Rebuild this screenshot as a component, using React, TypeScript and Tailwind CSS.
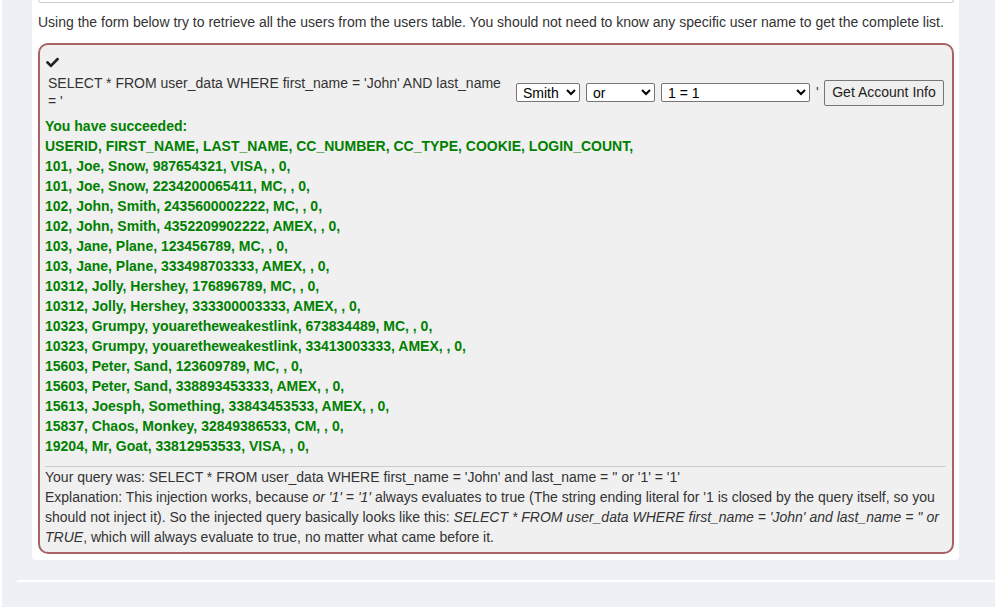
import { FaCheck } from "react-icons/fa";

// Result panel of an SQL injection lesson: prompt, the query form and the dumped rows.

const rows = [
  "USERID, FIRST_NAME, LAST_NAME, CC_NUMBER, CC_TYPE, COOKIE, LOGIN_COUNT,",
  "101, Joe, Snow, 987654321, VISA, , 0,",
  "101, Joe, Snow, 2234200065411, MC, , 0,",
  "102, John, Smith, 2435600002222, MC, , 0,",
  "102, John, Smith, 4352209902222, AMEX, , 0,",
  "103, Jane, Plane, 123456789, MC, , 0,",
  "103, Jane, Plane, 333498703333, AMEX, , 0,",
  "10312, Jolly, Hershey, 176896789, MC, , 0,",
  "10312, Jolly, Hershey, 333300003333, AMEX, , 0,",
  "10323, Grumpy, youaretheweakestlink, 673834489, MC, , 0,",
  "10323, Grumpy, youaretheweakestlink, 33413003333, AMEX, , 0,",
  "15603, Peter, Sand, 123609789, MC, , 0,",
  "15603, Peter, Sand, 338893453333, AMEX, , 0,",
  "15613, Joesph, Something, 33843453533, AMEX, , 0,",
  "15837, Chaos, Monkey, 32849386533, CM, , 0,",
  "19204, Mr, Goat, 33812953533, VISA, , 0,",
];

const selectCls =
  "h-[19px] rounded-[2px] border border-[#767676] bg-white pl-[2px] text-[14px] leading-none text-black";

export default function App() {
  return (
    <div className="h-[615px] w-[995px] overflow-hidden bg-white font-['Liberation_Sans',Arial,sans-serif] text-[14px] text-[#333]">
      <div className="ml-[2px] flex h-[607px] flex-col bg-[#eef0f5]">
        <div className="ml-[30px] mr-[36px] rounded-b-[4px] bg-white pb-[6px] pl-[6px] pr-[5px]">
          <div className="h-[3px] rounded-b-[4px] border-x border-b border-[#cfcfcf]" />

          <p className="mt-[10px] leading-[18px]">
            Using the form below try to retrieve all the users from the users table. You should not need to
            know any specific user name to get the complete list.
          </p>

          <div className="mt-[12px] rounded-[10px] border-2 border-[#a86464] bg-[#f0f0f0] pb-[5px] pl-[5px] pr-[6px]">
            <div className="pt-[7px] leading-[18px]">
              <FaCheck className="ml-[1px] inline h-[13px] w-[13px] text-[#222]" />
            </div>

            <div className="mt-[2px] flex items-center py-[2px]">
              <div className="w-[471px] pl-[3px] pr-[6px] leading-[18px]">
                SELECT * FROM user_data WHERE first_name = 'John' AND last_name = '
              </div>
              <div className="flex items-center pt-[1px]">
                <select className={`${selectCls} w-[64px]`} defaultValue="Smith">
                  <option>Smith</option>
                  <option>'</option>
                </select>
                <select className={`${selectCls} ml-[6px] w-[69px]`} defaultValue="or">
                  <option>or</option>
                  <option>and</option>
                </select>
                <select className={`${selectCls} ml-[6px] w-[149px]`} defaultValue="1 = 1">
                  <option>1 = 1</option>
                  <option>1 = 2</option>
                </select>
                <span className="ml-[6px] w-[8px]">'</span>
                <button
                  type="button"
                  className="h-[26px] w-[120px] rounded-[2px] border border-[#767676] bg-[#efefef] text-[14px] text-[#222]"
                >
                  Get Account Info
                </button>
              </div>
            </div>

            <div className="mt-[4px] font-bold leading-[20px] text-[#008000]">
              <div>You have succeeded:</div>
              {rows.map((r, i) => (
                <div key={i}>{r}</div>
              ))}
            </div>

            <hr className="mt-[10px] border-t border-[#cccccc]" />

            <div className="leading-[20px]">
              <div>
                Your query was: SELECT * FROM user_data WHERE first_name = 'John' and last_name = '' or '1' = '1'
              </div>
              <div>
                Explanation: This injection works, because <i>or '1' = '1'</i> always evaluates to true (The
                string ending literal for '1 is closed by the query itself, so you should not inject it). So the
                injected query basically looks like this:{" "}
                <i>SELECT * FROM user_data WHERE first_name = 'John' and last_name = '' or TRUE</i>, which will
                always evaluate to true, no matter what came before it.
              </div>
            </div>
          </div>
        </div>

        <div className="ml-[15px] mt-[20px] border-t-2 border-white" />
      </div>
    </div>
  );
}
